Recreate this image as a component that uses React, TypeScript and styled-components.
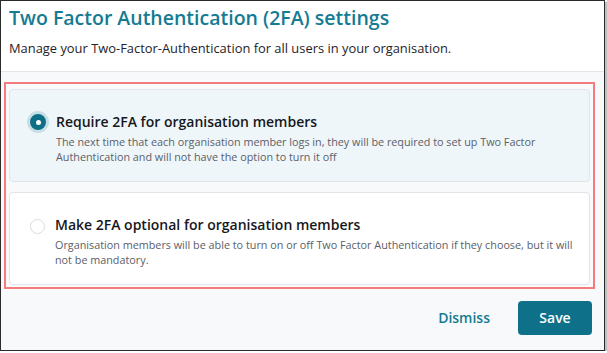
import React from "react";
import styled, { createGlobalStyle } from "styled-components";

const Global = createGlobalStyle`
  html, body { margin: 0; padding: 0; background: #ffffff; }
  body { font-family: "Open Sans", "Noto Sans", Arial, sans-serif; }
`;

const Frame = styled.div`
  width: 603px;
  height: 349px;
  border: 1px solid #2b2b2b;
  box-shadow: 2px 2px 1px rgba(0, 0, 0, 0.25);
  background: #f8f9fb;
  display: flex;
  flex-direction: column;
  overflow: hidden;
`;

const Header = styled.header`
  background: #ffffff;
  border-bottom: 1px solid #e2e5ea;
  padding: 3px 8px 0 8px;
  height: 67px;
  box-sizing: content-box;
`;

const Title = styled.h1`
  margin: 0;
  font-size: 19.5px;
  line-height: 28px;
  font-weight: 600;
  color: #147b92;
`;

const Subtitle = styled.p`
  margin: 7px 0 0 0;
  font-size: 12.9px;
  line-height: 18px;
  color: #1f2328;
`;

const Body = styled.main`
  padding: 10px 9px 0 3px;
  display: flex;
  flex-direction: column;
`;

const Highlight = styled.div`
  border: 2px solid #f47c7c;
  padding: 5px 3px 2px 3px;
  display: flex;
  flex-direction: column;
  gap: 10px;
`;

const Option = styled.label<{ $selected?: boolean }>`
  display: flex;
  align-items: flex-start;
  gap: 10px;
  padding: 22px 12px 0 20px;
  height: 93px;
  box-sizing: border-box;
  border: 1px solid #e1e5ea;
  border-radius: 4px;
  background: ${(p) => (p.$selected ? "#eff6f9" : "#ffffff")};
  cursor: pointer;
`;

const Radio = styled.span<{ $checked?: boolean }>`
  flex: none;
  margin-top: 2px;
  width: 16px;
  height: 16px;
  border-radius: 50%;
  box-sizing: border-box;
  ${(p) =>
    p.$checked
      ? `background: #0f6f86;
         border: 4px solid #0f6f86;
         box-shadow: 0 0 0 3px #c7dfe6;
         display: flex; align-items: center; justify-content: center;
         &::after { content: ""; width: 5px; height: 5px; border-radius: 50%; background: #fff; }`
      : `background: #ffffff; border: 1px solid #d7dce2; margin-top: 4px; width: 15px; height: 15px;`}
`;

const OptionText = styled.div`
  display: flex;
  flex-direction: column;
`;

const OptionTitle = styled.div`
  font-size: 14px;
  line-height: 20px;
  font-weight: 600;
  color: #16181c;
`;

const OptionDesc = styled.div`
  margin-top: 3px;
  font-size: 10.8px;
  line-height: 14.5px;
  color: #5b6068;
`;

const Footer = styled.footer`
  flex: 1;
  display: flex;
  justify-content: flex-end;
  align-items: center;
  gap: 28px;
  padding: 0 12px 4px 0;
`;

const LinkButton = styled.button`
  border: none;
  background: none;
  padding: 0;
  font-family: inherit;
  font-size: 14px;
  font-weight: 600;
  color: #147b92;
  cursor: pointer;
`;

const PrimaryButton = styled.button`
  border: none;
  border-radius: 4px;
  background: #0e7189;
  color: #ffffff;
  font-family: inherit;
  font-size: 14px;
  font-weight: 600;
  width: 74px;
  height: 34px;
  cursor: pointer;
`;

const options = [
  {
    title: "Require 2FA for organisation members",
    desc: "The next time that each organisation member logs in, they will be required to set up Two Factor Authentication and will not have the option to turn it off",
    checked: true,
  },
  {
    title: "Make 2FA optional for organisation members",
    desc: "Organisation members will be able to turn on or off Two Factor Authentication if they choose, but it will not be mandatory.",
    checked: false,
  },
];

export default function App() {
  return (
    <>
      <Global />
      <Frame>
        <Header>
          <Title>Two Factor Authentication (2FA) settings</Title>
          <Subtitle>Manage your Two-Factor-Authentication for all users in your organisation.</Subtitle>
        </Header>
        <Body>
          <Highlight>
            {options.map((o) => (
              <Option key={o.title} $selected={o.checked}>
                <Radio $checked={o.checked} />
                <OptionText>
                  <OptionTitle>{o.title}</OptionTitle>
                  <OptionDesc>{o.desc}</OptionDesc>
                </OptionText>
              </Option>
            ))}
          </Highlight>
        </Body>
        <Footer>
          <LinkButton>Dismiss</LinkButton>
          <PrimaryButton>Save</PrimaryButton>
        </Footer>
      </Frame>
    </>
  );
}
